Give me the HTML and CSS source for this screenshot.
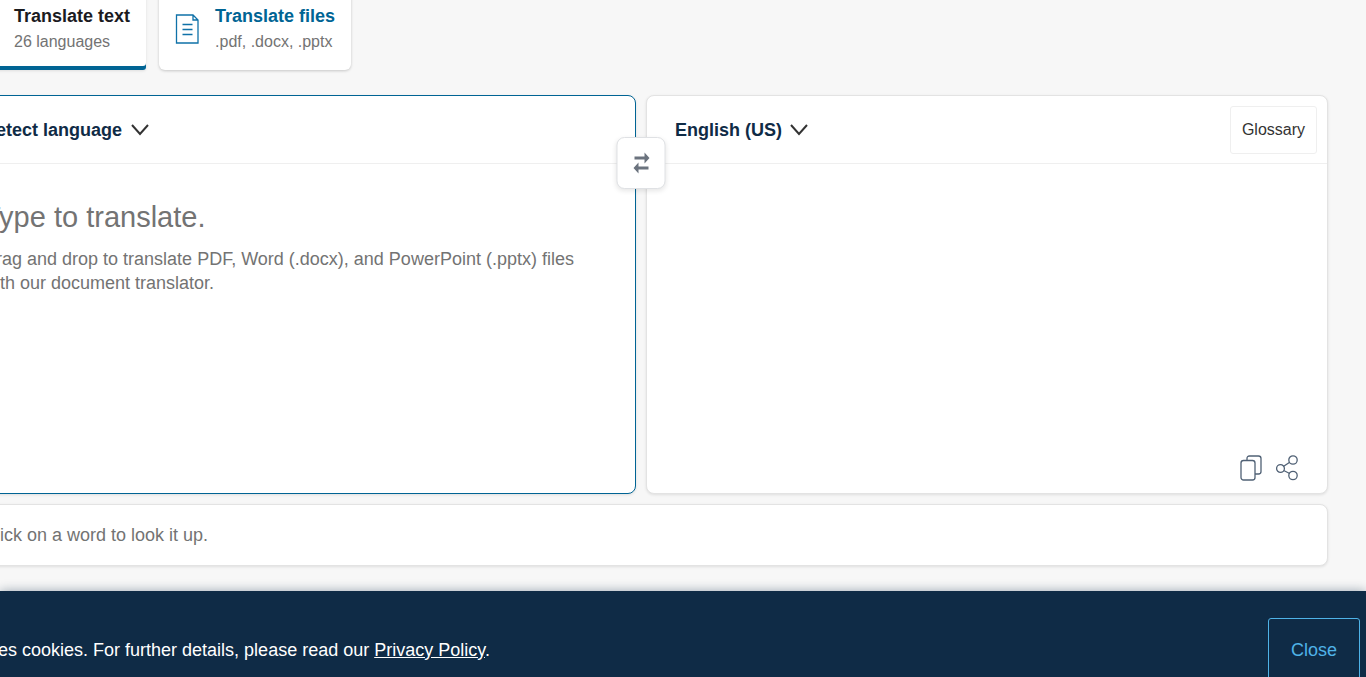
FILE: index.html
```html
<!DOCTYPE html>
<html lang="en">
<head>
    <meta charset="utf-8">
    <title>Translator</title>
    <link rel="stylesheet" href="styles.css">
</head>
<body>
    <main class="translator">
        <!-- Mode tabs -->
        <nav class="tabs">
            <button class="tab active">
                <svg class="tab-icon" width="24" height="30" viewBox="0 0 24 30"><path d="M1 1h22v28H1z"/></svg>
                <span>
                    <strong>Translate text</strong>
                    <small>26 languages</small>
                </span>
            </button>
            <button class="tab">
                <svg class="tab-icon" width="24" height="30" viewBox="0 0 24 30">
                    <path d="M1.500 1H18l5 5v23H1.500zM18 1v5h5M7.500 10.500h10M7.500 15.500h10M7.500 20.500h10"/>
                </svg>
                <span>
                    <strong>Translate files</strong>
                    <small>.pdf, .docx, .pptx</small>
                </span>
            </button>
        </nav>

        <!-- Source and target -->
        <div class="panes">
            <section class="pane source">
                <div class="pane-header">
                    <label class="language">
                        <select aria-label="Source language"><option>Detect language</option></select>
                        <svg width="18" height="12" viewBox="0 0 18 12"><path d="M1 1l8 9 8-9"/></svg>
                    </label>
                </div>
                <div class="pane-body">
                    <textarea rows="1" aria-label="Source text" placeholder="Type to translate."></textarea>
                    <p>Drag and drop to translate PDF, Word (.docx), and PowerPoint (.pptx) files<br>with our document translator.</p>
                </div>
            </section>

            <button class="swap" aria-label="Swap languages">
                <svg width="18" height="22" viewBox="0 0 18 22">
                    <path d="M2 4.500h10V0.500l5 5.500-5 5.500V7.500H2zM16 14.500H6v-4L1 16l5 5.500v-4h10z"/>
                </svg>
            </button>

            <section class="pane">
                <div class="pane-header">
                    <label class="language">
                        <select aria-label="Target language"><option>English (US)</option></select>
                        <svg width="18" height="12" viewBox="0 0 18 12"><path d="M1 1l8 9 8-9"/></svg>
                    </label>
                    <button class="glossary">Glossary</button>
                </div>
                <div class="pane-body"></div>
                <div class="actions">
                    <button aria-label="Copy">
                        <svg width="22" height="26" viewBox="0 0 22 26">
                            <rect x="1" y="5.500" width="14" height="19.500" rx="2.500"/>
                            <path d="M7 5.500V3.500Q7 1 9.500 1H18.500Q21 1 21 3.500V16.500Q21 19 18.500 19H15"/>
                        </svg>
                    </button>
                    <button aria-label="Share">
                        <svg width="22" height="26" viewBox="0 0 22 26">
                            <circle cx="4.500" cy="13.500" r="3.900"/>
                            <circle cx="17" cy="5" r="4.200"/>
                            <circle cx="17" cy="20.500" r="4.200"/>
                            <path d="M7.700 11.300l6-4M7.700 15.500l6 3"/>
                        </svg>
                    </button>
                </div>
            </section>
        </div>

        <div class="dictionary">Click on a word to look it up.</div>
    </main>

    <footer class="cookies">
        <p>uses cookies. For further details, please read our <a href="#">Privacy Policy</a>.</p>
        <button>Close</button>
    </footer>
</body>
</html>
```
FILE: styles.css
```css
* {
    box-sizing: border-box;
}

body {
    margin: 0;
    overflow: hidden;
    background: #f7f7f7;
    color: #737373;
    font-family: "Liberation Sans", Arial, sans-serif;
    font-size: 18px;
    line-height: 24px;
}

button,
select,
textarea {
    font: inherit;
    border: none;
    background: none;
    padding: 0;
    margin: 0;
}

button {
    cursor: pointer;
}

svg {
    display: block;
    fill: none;
}

p {
    margin: 0;
}

.translator {
    margin: -13px 38px 0 -46px;
}

/* Tabs */
.tabs {
    display: flex;
    gap: 13px;
    margin-bottom: 25px;
    padding-left: 4px;
}

.tab {
    display: flex;
    align-items: center;
    gap: 16px;
    padding: 16px 16px 15px;
    background: #fff;
    border-radius: 6px;
    box-shadow: 0 1px 3px rgba(0, 0, 0, 0.2);
    text-align: left;
    line-height: 26px;
    color: #006494;
}

.tab.active {
    color: #1b1b1f;
    border-radius: 6px 6px 3px 3px;
    box-shadow: inset 0 -4px 0 #006494, 0 1px 3px rgba(0, 0, 0, 0.1);
}

.tab strong,
.tab small {
    display: block;
}

.tab small {
    font-size: 16px;
    color: #737373;
}

.tab-icon {
    stroke: #0f71a8;
    stroke-width: 1.3;
}

/* Panes */
.panes {
    position: relative;
    display: grid;
    grid-template-columns: 1fr 1fr;
    gap: 10px;
}

.pane {
    display: flex;
    flex-direction: column;
    min-height: 399px;
    background: #fff;
    border: 1px solid #e3e3e3;
    border-radius: 8px;
    box-shadow: 0 1px 3px rgba(0, 0, 0, 0.1);
}

.pane.source {
    border-color: #006494;
}

.pane-header {
    display: flex;
    align-items: center;
    justify-content: space-between;
    height: 68px;
    padding: 0 10px 0 28px;
    border-bottom: 1px solid #efefef;
}

.language {
    display: flex;
    align-items: center;
    gap: 8px;
}

.language select {
    appearance: none;
    color: #0f2b46;
    font-weight: bold;
}

.language svg {
    stroke: #333;
    stroke-width: 2;
}

.glossary {
    height: 48px;
    padding: 0 11px;
    border: 1px solid #efefef;
    border-radius: 3px;
    color: #333;
    font-size: 16px;
}

.pane-body {
    flex: 1;
    padding: 35px 28px;
}

.pane-body textarea {
    display: block;
    width: 100%;
    height: 36px;
    margin-bottom: 12px;
    overflow: hidden;
    resize: none;
    outline: none;
    font-size: 29px;
    line-height: 36px;
}

.pane-body textarea::placeholder {
    color: #737373;
}

.swap {
    position: absolute;
    top: 42px;
    left: 50%;
    transform: translateX(-50%);
    display: flex;
    align-items: center;
    justify-content: center;
    width: 49px;
    height: 52px;
    background: #fff;
    border: 1px solid #dfe1e4;
    border-radius: 8px;
    box-shadow: 0 2px 5px rgba(0, 0, 0, 0.1);
}

.swap svg {
    fill: #6b737e;
}

.actions {
    display: flex;
    justify-content: flex-end;
    gap: 14px;
    padding: 0 29px 12px;
}

.actions svg {
    stroke: #506175;
    stroke-width: 1.3;
}

.dictionary {
    margin-top: 10px;
    padding: 18px 28px;
    background: #fff;
    border: 1px solid #e3e3e3;
    border-radius: 8px;
    box-shadow: 0 1px 3px rgba(0, 0, 0, 0.1);
}

/* Cookie banner */
.cookies {
    display: flex;
    align-items: center;
    justify-content: space-between;
    margin-top: 25px;
    padding: 27px 6px 27px 0;
    background: #0f2b46;
    color: #fff;
    box-shadow: 0 0 10px rgba(15, 43, 70, 0.4);
}

.cookies p {
    margin-left: -21px;
}

.cookies a {
    color: #fff;
}

.cookies button {
    height: 64px;
    padding: 0 22px;
    border: 1px solid #4fb3e8;
    border-radius: 3px;
    color: #4fb3e8;
}
```
